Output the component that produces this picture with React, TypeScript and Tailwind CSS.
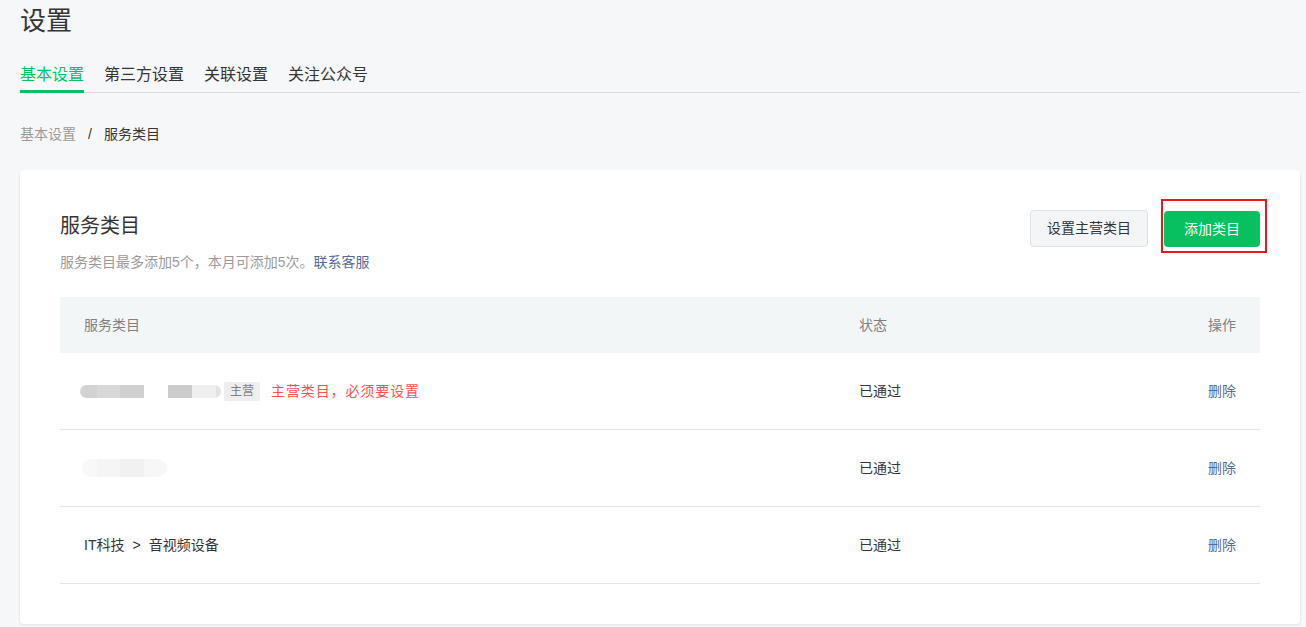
import React from "react";

const font = { fontFamily: '"Liberation Sans","Noto Sans CJK SC",sans-serif' };

function Row({ children }: { children: React.ReactNode }) {
  return (
    <div className="grid grid-cols-[775px_1fr_auto] h-[77px] items-center border-b border-[#e5e5e5] text-[14px]">
      <div className="pl-[24px] flex items-center text-[#353535]">{children}</div>
      <div className="pl-[24px] text-[#353535]">已通过</div>
      <div className="pr-[24px] text-[#576b95]">删除</div>
    </div>
  );
}

export default function App() {
  return (
    <div className="min-h-[627px] bg-[#f6f7f9] pl-[20px] pr-[6px] pb-[3px]" style={font}>
      <div className="w-[1280px]">
        <div className="text-[26px] leading-[40px] text-[#353535] pt-[1px]">设置</div>
        <div className="mt-[22px] flex gap-[20px] border-b border-[#dcdcdc] text-[16px] leading-[24px]">
          <div className="pb-[3px] border-b-[3px] border-[#07c160] text-[#07c160] -mb-[1px]">基本设置</div>
          <div className="pb-[3px] text-[#353535]">第三方设置</div>
          <div className="pb-[3px] text-[#353535]">关联设置</div>
          <div className="pb-[3px] text-[#353535]">关注公众号</div>
        </div>
        <div className="mt-[31px] flex items-center text-[14px] leading-[20px]">
          <span className="text-[#9a9a9a]">基本设置</span>
          <span className="mx-[12px] text-[#353535]">/</span>
          <span className="text-[#353535]">服务类目</span>
        </div>
        <div className="mt-[26px] bg-white rounded-[4px] shadow-[0_1px_3px_rgba(0,0,0,0.1)] p-[40px]">
          <div className="flex justify-between items-start">
            <div>
              <div className="text-[20px] leading-[32px] text-[#353535]">服务类目</div>
              <div className="mt-[9px] text-[14px] leading-[22px] text-[#9a9a9a]">
                服务类目最多添加5个，本月可添加5次。<span className="text-[#576b95]">联系客服</span>
              </div>
            </div>
            <div className="flex gap-[16px] items-start">
              <div className="w-[118px] h-[37px] rounded-[4px] bg-[#f4f5f7] border border-[#dfe0e3] flex items-center justify-center text-[14px] text-[#353535]">
                设置主营类目
              </div>
              <div className="relative mt-[1px]">
                <div className="w-[96px] h-[36px] rounded-[4px] bg-[#07c160] flex items-center justify-center text-[14px] text-white">
                  添加类目
                </div>
                <div className="absolute left-[-3px] right-[-7px] top-[-12px] bottom-[-6px] border-2 border-[#e8161d]" />
              </div>
            </div>
          </div>
          <div className="mt-[24px]">
            <div className="grid grid-cols-[775px_1fr_auto] h-[56px] items-center bg-[#f3f6f6] text-[14px] text-[#7f7f7f]">
              <div className="pl-[24px]">服务类目</div>
              <div className="pl-[24px]">状态</div>
              <div className="pr-[24px]">操作</div>
            </div>
            <Row>
              <div className="flex items-center">
                <div className="-ml-[4px] flex h-[13px] w-[64px] rounded-l-full overflow-hidden">
                  <div className="w-[17px] bg-[#d2d2d2]" />
                  <div className="w-[23px] bg-[#d8d8d8]" />
                  <div className="w-[24px] bg-[#d0d0d0]" />
                </div>
                <div className="ml-[24px] flex h-[13px] w-[53px] rounded-r-full overflow-hidden">
                  <div className="w-[24px] bg-[#cccccc]" />
                  <div className="w-[24px] bg-[#efefef]" />
                  <div className="w-[5px] bg-[#e3e3e3]" />
                </div>
                <div className="ml-[3px] h-[19px] px-[6px] rounded-[2px] bg-[#eeeeee] text-[12px] leading-[19px] text-[#7f7f7f]">主营</div>
                <div className="ml-[11px] text-[#fa5151] tracking-[0.9px]">主营类目，必须要设置</div>
              </div>
            </Row>
            <Row>
              <div className="-ml-[2px] flex h-[18px] w-[85px] rounded-full overflow-hidden">
                <div className="w-[15px] bg-[#f8f8f8]" />
                <div className="w-[23px] bg-[#f5f5f5]" />
                <div className="w-[24px] bg-[#f1f1f1]" />
                <div className="w-[23px] bg-[#f7f7f7]" />
              </div>
            </Row>
            <Row>
              <span>IT科技</span>
              <span className="mx-[8px]">&gt;</span>
              <span>音视频设备</span>
            </Row>
          </div>
        </div>
      </div>
    </div>
  );
}
